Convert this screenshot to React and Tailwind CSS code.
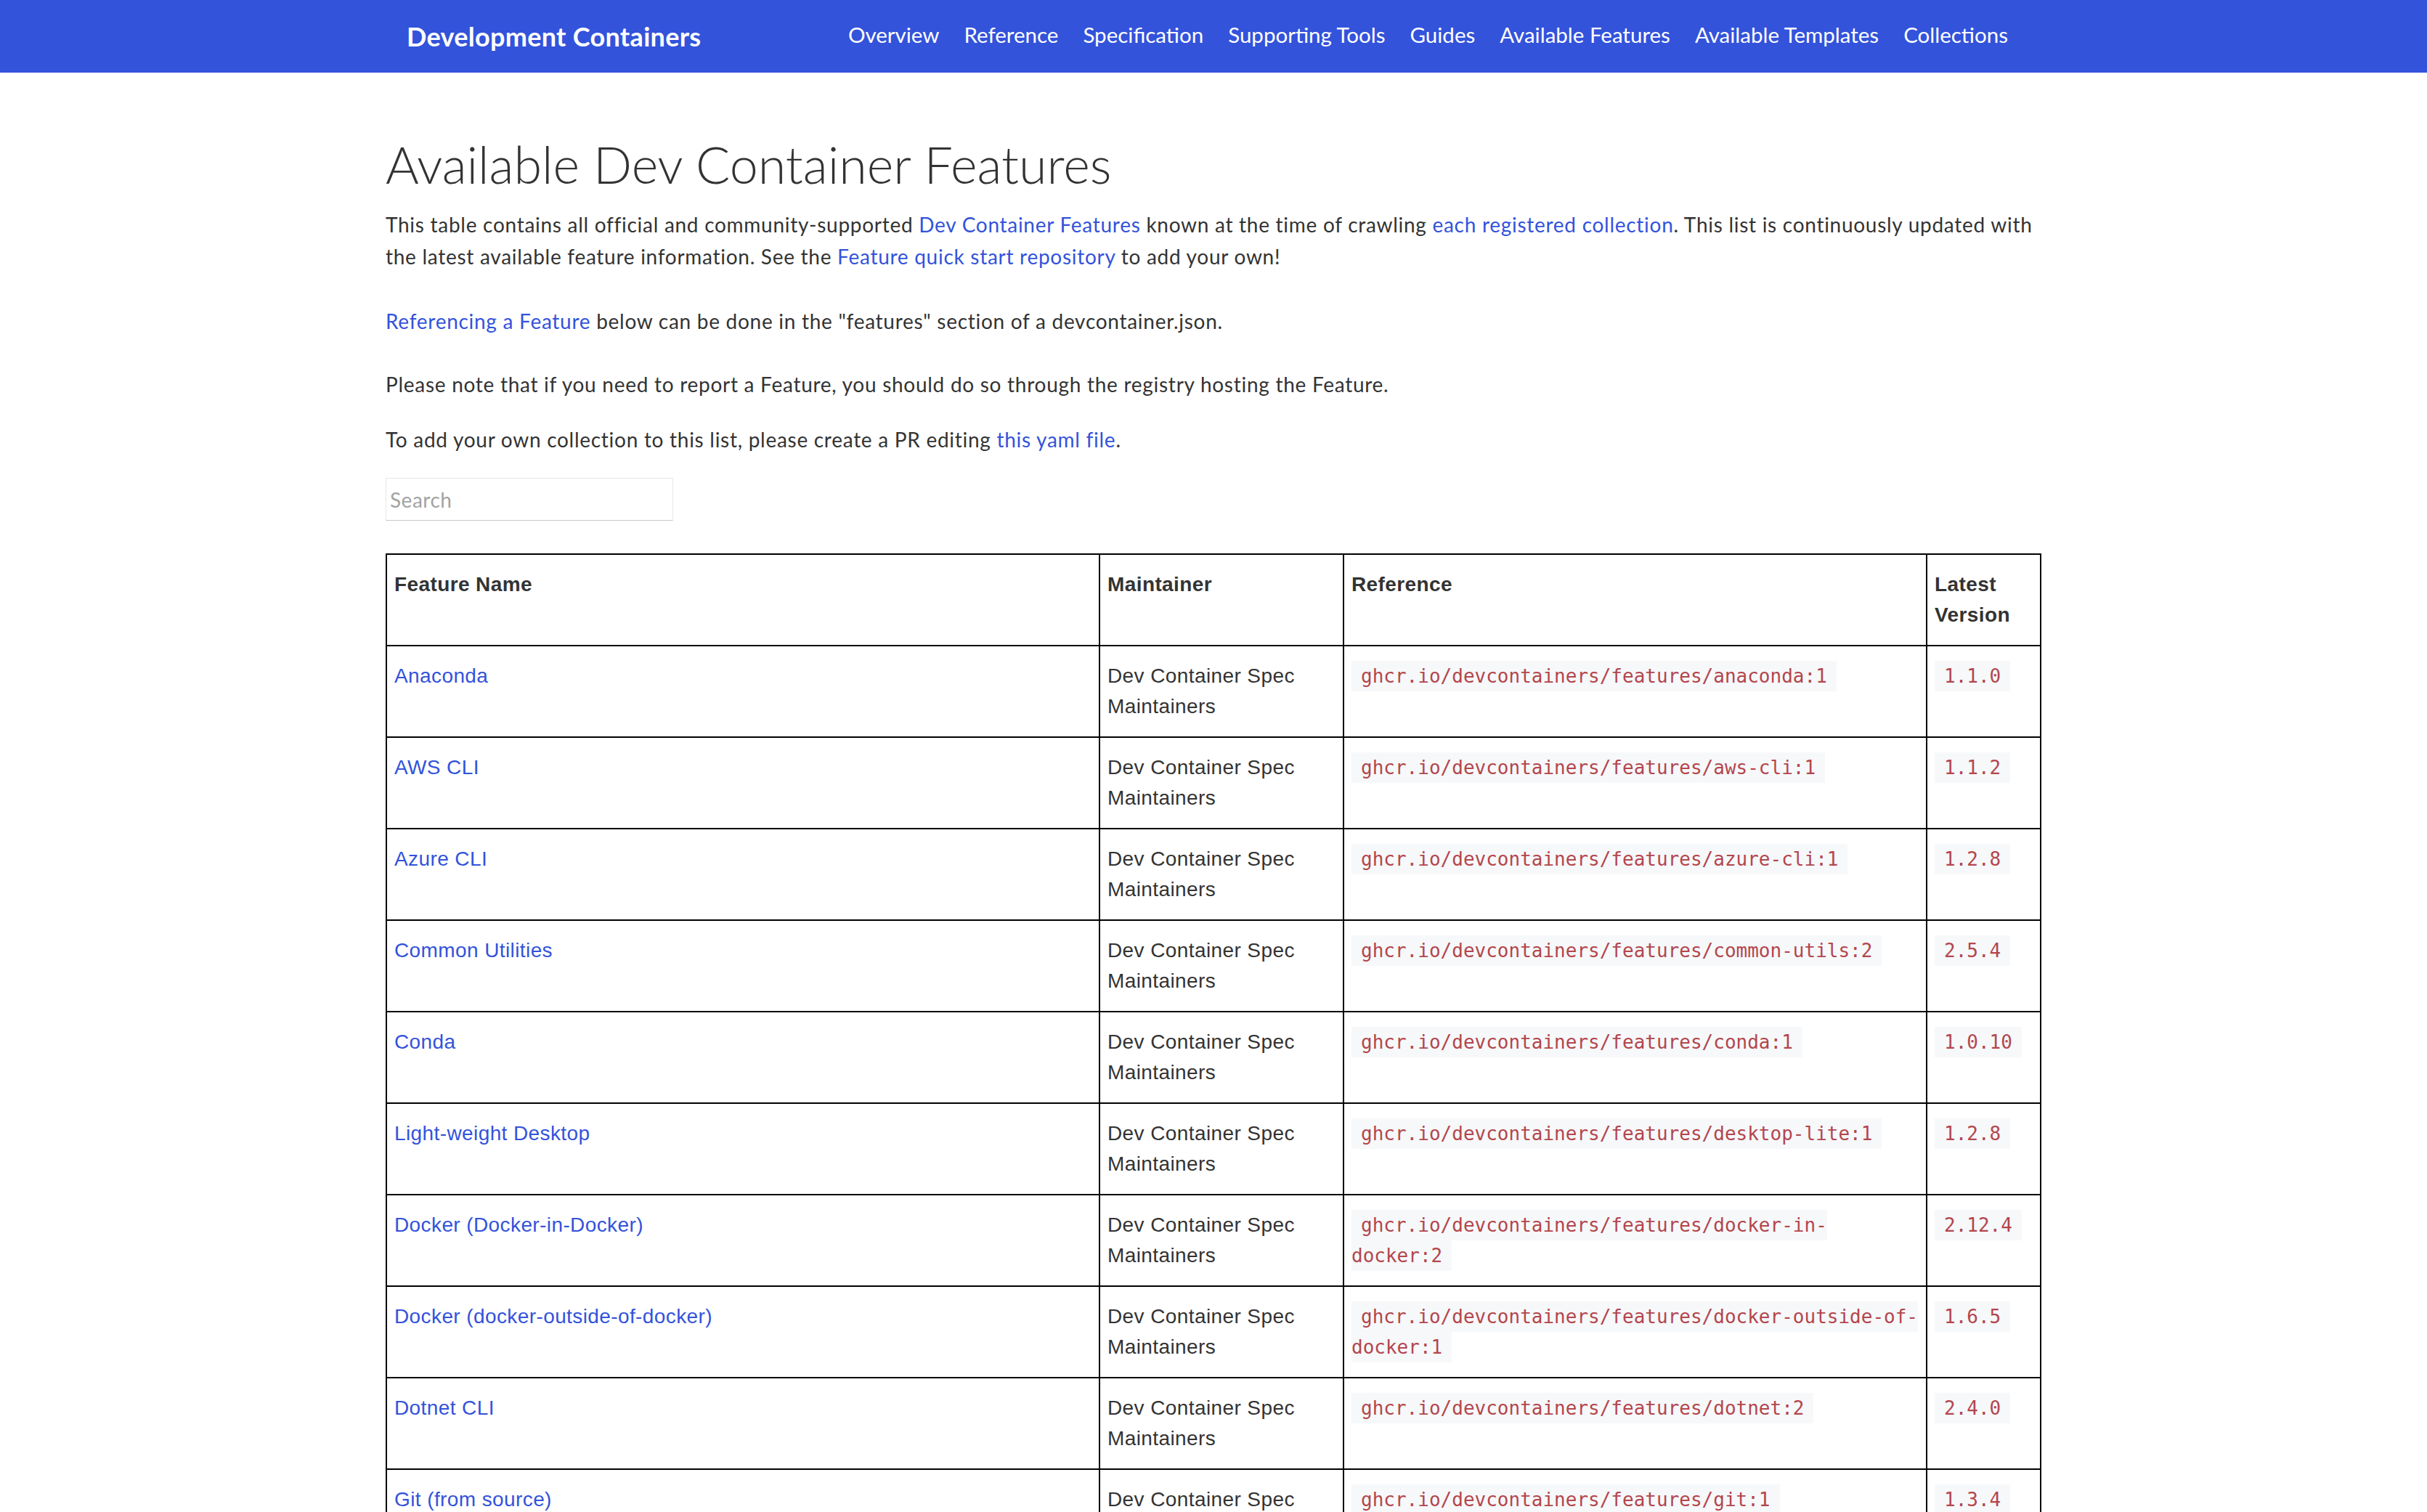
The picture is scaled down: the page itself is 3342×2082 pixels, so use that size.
import React from "react";

const NAV = [
  "Overview",
  "Reference",
  "Specification",
  "Supporting Tools",
  "Guides",
  "Available Features",
  "Available Templates",
  "Collections",
];

const ROWS = [
  ["Anaconda", ["ghcr.io/devcontainers/features/anaconda:1"], "1.1.0"],
  ["AWS CLI", ["ghcr.io/devcontainers/features/aws-cli:1"], "1.1.2"],
  ["Azure CLI", ["ghcr.io/devcontainers/features/azure-cli:1"], "1.2.8"],
  ["Common Utilities", ["ghcr.io/devcontainers/features/common-utils:2"], "2.5.4"],
  ["Conda", ["ghcr.io/devcontainers/features/conda:1"], "1.0.10"],
  ["Light-weight Desktop", ["ghcr.io/devcontainers/features/desktop-lite:1"], "1.2.8"],
  ["Docker (Docker-in-Docker)", ["ghcr.io/devcontainers/features/docker-in-", "docker:2"], "2.12.4"],
  ["Docker (docker-outside-of-docker)", ["ghcr.io/devcontainers/features/docker-outside-of-", "docker:1"], "1.6.5"],
  ["Dotnet CLI", ["ghcr.io/devcontainers/features/dotnet:2"], "2.4.0"],
  ["Git (from source)", ["ghcr.io/devcontainers/features/git:1"], "1.3.4"],
  ["Git Large File Support (LFS)", ["ghcr.io/devcontainers/features/git-lfs:1"], "1.2.2"],
];

function Code({ parts }) {
  return (
    <code className="font-['DejaVu_Sans_Mono',monospace] text-[26px] tracking-normal text-[#b4464c] bg-[#f6f8fa] px-[13px] py-[6px] whitespace-nowrap">
      {parts.map((p, i) => (
        <React.Fragment key={i}>
          {i > 0 && <br />}
          {p}
        </React.Fragment>
      ))}
    </code>
  );
}

const cell = "border-2 border-black px-[10px] py-[20px] align-top text-left";
const para = "text-[28px] leading-[44px] tracking-[0.72px]";

export default function App() {
  return (
    <div className="h-[2082px] overflow-hidden bg-white text-[#333]">
      <header className="h-[100px] bg-[#3353db]">
        <div className="w-[2280px] mx-auto h-full px-[29px] flex items-center justify-between">
          <a className="font-['Lato',sans-serif] font-bold text-[36px] tracking-[0.3px] text-white">
            Development Containers
          </a>
          <nav className="flex items-center pb-[4px]">
            {NAV.map((n) => (
              <a key={n} className="px-[17px] font-['Lato',sans-serif] text-[29.5px] text-white">
                {n}
              </a>
            ))}
          </nav>
        </div>
      </header>

      <main className="w-[2280px] mx-auto font-['Lato',sans-serif]">
        <h1 className="mt-[84px] text-[70px] leading-[84px] font-light text-[#333]">
          Available Dev Container Features
        </h1>
        <p className={"mt-[19px] whitespace-nowrap " + para}>
          This table contains all official and community-supported{" "}
          <a className="text-[#3353db]">Dev Container Features</a> known at the time of crawling{" "}
          <a className="text-[#3353db]">each registered collection</a>. This list is continuously updated with
          <br />
          the latest available feature information. See the{" "}
          <a className="text-[#3353db]">Feature quick start repository</a> to add your own!
        </p>
        <p className={"mt-[45px] " + para}>
          <a className="text-[#3353db]">Referencing a Feature</a> below can be done in the "features" section of a
          devcontainer.json.
        </p>
        <p className={"mt-[43px] " + para}>
          Please note that if you need to report a Feature, you should do so through the registry hosting the Feature.
        </p>
        <p className={"mt-[32px] " + para}>
          To add your own collection to this list, please create a PR editing{" "}
          <a className="text-[#3353db]">this yaml file</a>.
        </p>
        <input
          placeholder="Search"
          className="mt-[31px] block w-[396px] h-[59px] border border-[#e8e8e8] border-b-[#c8c8c8] px-[5px] text-[28px] tracking-[0.5px] font-['Lato',sans-serif] placeholder:text-[#a3a3a3] outline-none"
        />

        <table className="mt-[45px] table-fixed border-collapse w-[2278px] font-['Liberation_Sans',Arial,sans-serif] text-[28px] leading-[42px] tracking-[0.4px] text-[#333]">
          <colgroup>
            <col className="w-[982px]" />
            <col className="w-[336px]" />
            <col className="w-[803px]" />
            <col className="w-[157px]" />
          </colgroup>
          <thead>
            <tr>
              <th className={cell + " font-bold"}>Feature Name</th>
              <th className={cell + " font-bold"}>Maintainer</th>
              <th className={cell + " font-bold"}>Reference</th>
              <th className={cell + " font-bold"}>Latest Version</th>
            </tr>
          </thead>
          <tbody>
            {ROWS.map(([name, ref, ver]) => (
              <tr key={name}>
                <td className={cell}>
                  <a className="text-[#3353db]">{name}</a>
                </td>
                <td className={cell}>Dev Container Spec Maintainers</td>
                <td className={cell}>
                  <Code parts={ref} />
                </td>
                <td className={cell}>
                  <Code parts={[ver]} />
                </td>
              </tr>
            ))}
          </tbody>
        </table>
      </main>
    </div>
  );
}
